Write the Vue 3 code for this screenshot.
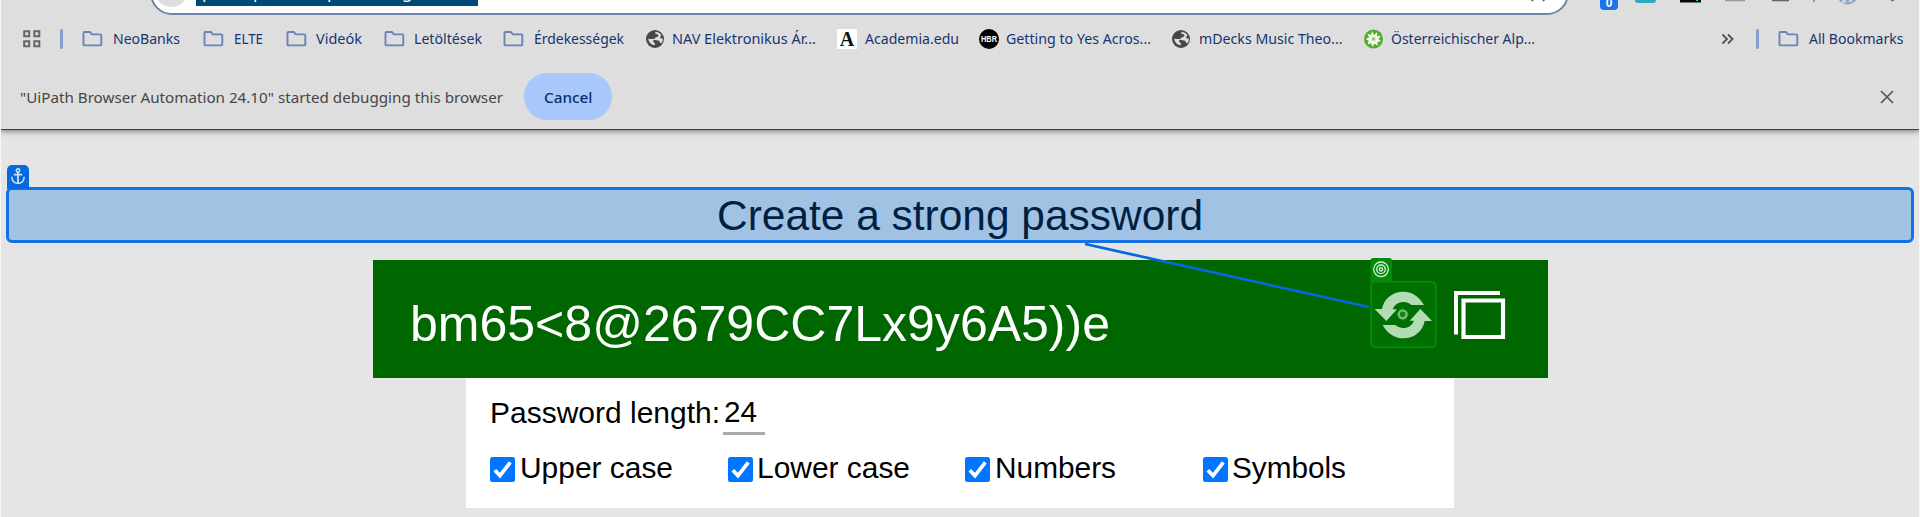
<script setup>
import { h } from 'vue'

// Single-line label set to an exact advance width.
const Fit = (p) =>
  h('svg', { class: 'fit', width: p.w, height: p.h, viewBox: `0 0 ${p.w} ${p.h}` }, [
    h('text', { x: 0, y: p.y, textLength: p.w, lengthAdjust: 'spacingAndGlyphs' }, p.text),
  ])
Fit.props = ['text', 'w', 'h', 'y']

const bookmarks = [
  { icon: 'folder', text: 'NeoBanks', w: 67, gap: 10, after: 23 },
  { icon: 'folder', text: 'ELTE', w: 29, gap: 10, after: 23 },
  { icon: 'folder', text: 'Videók', w: 46, gap: 9, after: 22 },
  { icon: 'folder', text: 'Letöltések', w: 68, gap: 9, after: 21 },
  { icon: 'folder', text: 'Érdekességek', w: 90, gap: 9.5, after: 22 },
  { icon: 'globe', text: 'NAV Elektronikus Ár...', w: 144, gap: 5.5, after: 21 },
  { icon: 'academia', text: 'Academia.edu', w: 94, gap: 7, after: 20 },
  { icon: 'hbr', text: 'Getting to Yes Acros...', w: 145, gap: 6, after: 20.5 },
  { icon: 'globe', text: 'mDecks Music Theo...', w: 143.5, gap: 6, after: 21.5 },
  { icon: 'alpen', text: 'Österreichischer Alp...', w: 144, gap: 6, after: 0 },
]
const options = [
  { text: 'Upper case', w: 153 },
  { text: 'Lower case', w: 153 },
  { text: 'Numbers', w: 121 },
  { text: 'Symbols', w: 114 },
]
</script>

<template>
  <div class="screen">
    <header class="chrome">
      <div class="omnibox">
        <span class="site"></span>
        <span class="selected"><i>p</i><i>p</i><i>/</i><i>p</i><i>g</i></span>
        <svg class="star" width="14" height="3" viewBox="0 0 14 3"><path d="M1 2L2 0M13 2L12 0" stroke="#555" stroke-width="2" /></svg>
      </div>
      <svg class="extensions" width="320" height="12" viewBox="0 0 320 12">
        <rect x="10" y="-8" width="18" height="18" rx="4" fill="#1a73e8" />
        <text x="19" y="6.5" text-anchor="middle" class="count">0</text>
        <rect x="45" y="-12" width="21" height="15" rx="3" fill="#28acc0" />
        <path d="M90 0h21v2.5H90z" fill="#050505" />
        <path d="M106 0h2v1h-2z" fill="#28c8b4" />
        <path d="M135 0h20v1.3h-20z" fill="#999" />
        <path d="M182 0h17v1.3h-17z" fill="#666" />
        <path d="M223 0h2v2h-2z" fill="#8099cd" />
        <circle cx="257.500" cy="-6" r="10.500" fill="#98a6bd" />
        <path d="M252 0h4v3h-4zM259 0h3v2h-3z" fill="#c8d4e8" />
        <circle cx="302.500" cy="-.5" r="1.800" fill="#666" />
      </svg>

      <nav class="bookmarks">
        <svg class="apps" width="18" height="18" viewBox="0 0 18 18">
          <path d="M1.200 1.200h5v5h-5zM11.300 1.200h5v5h-5zM1.200 11.300h5v5h-5zM11.300 11.300h5v5h-5z" fill="none" stroke="#666" stroke-width="2" />
        </svg>
        <span class="divider first"></span>
        <div v-for="b in bookmarks" :key="b.text" class="bookmark" :style="{ gap: b.gap + 'px', marginRight: b.after + 'px' }">
          <svg class="icon" width="21" height="20" viewBox="0 0 21 20">
            <path v-if="b.icon === 'folder'" d="M2.500 3h5.300l2.200 2.400h8.300q1 0 1 1v9q0 1-1 1H2.500q-1 0-1-1V4q0-1 1-1z" fill="none" stroke="#6b82b6" stroke-width="1.900" />
            <g v-else-if="b.icon === 'globe'">
              <circle cx="9" cy="10" r="9" fill="#45484b" />
              <path d="M9.500 2.700q-1 1.500.5 2.200l2.200.7v2l-2.400.8q-1.300.5-1.600 1.600H3.800l-1.600-.6q.2 3 2.300 5.100 1.900 1.700 4.300 1.800V14q-2.300-.8-1.700-2.200.6-1.200 2.200-.9l2.500.5q2-.2 1.900 1.700 0 .9.8.9l1.200-.3q1.500-2.100 1.200-4.300h-2.400q-1-1.700 1-3.400Q13.500 3.100 9.500 2.700z" fill="#dedede" />
            </g>
            <g v-else-if="b.icon === 'academia'">
              <path d="M0 0h20v20H0z" fill="#fff" />
              <text x="10" y="17" text-anchor="middle" class="serif">A</text>
            </g>
            <g v-else-if="b.icon === 'hbr'">
              <circle cx="10" cy="10" r="10" fill="#000" />
              <text x="2" y="13" textLength="16" lengthAdjust="spacingAndGlyphs" class="hbr">HBR</text>
            </g>
            <g v-else>
              <circle cx="9.500" cy="10" r="9.500" fill="#54ad27" />
              <path d="M8 2l2.200 4L13 3l.3 4.300L17 6.800l-2.600 3.300 2.800 2.200-3.900.8.500 3.700-3.200-2.300L8.500 18l-1.400-3.700-3.500 1.200 1-3.800-2.900-1.600 3.400-1.900-1.600-3.500 3.700 1z" fill="#f2f7ef" />
              <path d="M9.500 8v4M7.500 10h4M8 8.500l3 3M11 8.500l-3 3" stroke="#75b856" stroke-width=".8" />
            </g>
          </svg>
          <Fit :text="b.text" :w="b.w" :h="22" :y="16" />
        </div>
        <div class="right">
          <svg width="14" height="12" viewBox="0 0 14 12"><path d="M1.500 1.500L6 6l-4.500 4.500M7 1.500L11.500 6 7 10.500" fill="none" stroke="#555" stroke-width="1.900" /></svg>
          <span class="divider last"></span>
          <div class="bookmark all">
            <svg width="21" height="20" viewBox="0 0 21 20"><path d="M2.500 3h5.300l2.200 2.400h8.300q1 0 1 1v9q0 1-1 1H2.500q-1 0-1-1V4q0-1 1-1z" fill="none" stroke="#6b82b6" stroke-width="1.900" /></svg>
            <Fit text="All Bookmarks" :w="94.5" :h="22" :y="16" />
          </div>
        </div>
      </nav>

      <div class="infobar">
        <Fit text="&quot;UiPath Browser Automation 24.10&quot; started debugging this browser" :w="483" :h="22" :y="17" />
        <button class="cancel"><Fit text="Cancel" :w="48.5" :h="22" :y="17" /></button>
        <svg class="close" width="14" height="14" viewBox="0 0 14 14"><path d="M1 1l12 12M13 1L1 13" stroke="#555" stroke-width="1.700" /></svg>
      </div>
    </header>

    <main class="page">
      <h1 class="title"><Fit text="Create a strong password" :w="486" :h="50" :y="38" /></h1>
      <section class="result">
        <Fit text="bm65&lt;8@2679CC7Lx9y6A5))e" :w="700" :h="60" :y="46" />
        <svg class="copy" width="52" height="50" viewBox="0 0 52 50">
          <path d="M2 43.500V2h44" fill="none" stroke="#fff" stroke-width="4" />
          <path d="M9.500 9.500h39.500v36.500H9.500z" fill="none" stroke="#fff" stroke-width="4.200" />
        </svg>
      </section>
      <section class="settings">
        <div class="length">
          <Fit text="Password length:" :w="230" :h="38" :y="30" />
          <span class="number"><Fit text="24" :w="33" :h="38" :y="29" /></span>
        </div>
        <div class="options">
          <label v-for="o in options" :key="o.text">
            <svg width="25" height="25" viewBox="0 0 25 25">
              <rect width="25" height="25" rx="2.500" fill="#0075ff" />
              <path d="M4.800 13.200l5.200 5.400L20.300 5.300" fill="none" stroke="#fff" stroke-width="3.700" />
            </svg>
            <Fit :text="o.text" :w="o.w" :h="38" :y="28" />
          </label>
        </div>
      </section>
    </main>

    <div class="anchor-box"></div>
    <div class="anchor-tag">
      <svg width="14" height="17" viewBox="0 0 14 17" fill="none" stroke="#cfe3fb" stroke-width="1.500">
        <circle cx="7" cy="2.500" r="1.700" /><path d="M7 4.200V15.500M2.800 6.600h8.400" stroke-width="1.800" /><path d="M.8 8.800Q1 15.200 7 15.400 13 15.200 13.200 8.800" />
      </svg>
    </div>
    <svg class="link" width="290" height="70" viewBox="0 0 290 70"><path d="M1 1L285 64" stroke="#0569dc" stroke-width="2.700" /></svg>
    <svg class="target" width="67" height="91" viewBox="89 54 201 273">
      <path d="M90 126V63q0-9 9-9h47q9 0 9 9v63z" fill="#048a0b" />
      <rect x="92.500" y="125" width="194" height="197" rx="13" fill="#007003" stroke="#048a0b" stroke-width="6" />
      <g fill="none" stroke="#d8eed9"><circle cx="122" cy="88" r="22" stroke-width="4" /><circle cx="122" cy="88" r="13" stroke-width="4" /><circle cx="122" cy="88" r="5" stroke-width="4" /></g>
      <g fill="#b3dcb5">
        <path d="M251 195C236 168 213 155 189 155C155 155 130 178 125 207L103 207L138 243L170 208L157 208C162 195 174 186 189 186C199 186 207 190 213 195Z" />
        <path transform="rotate(180 189 225)" d="M251 195C236 168 213 155 189 155C155 155 130 178 125 207L103 207L138 243L170 208L157 208C162 195 174 186 189 186C199 186 207 190 213 195Z" />
      </g>
      <path d="M187 203v40M167 223h40" stroke="#118516" stroke-width="4" />
      <circle cx="187" cy="223" r="12" fill="#118516" stroke="#79bd7b" stroke-width="7" />
    </svg>
    <span class="edge left"></span><span class="edge end"></span>
  </div>
</template>

<style>
body { margin: 0; background: #e5e5e5; }
</style>
<style scoped>
.screen { position: relative; width: 1920px; height: 517px; overflow: hidden; background: #e5e5e5; font-family: "Liberation Sans", Arial, sans-serif; }
.fit { display: block; flex: none; overflow: visible; }
svg { flex: none; }
.chrome { box-sizing: border-box; position: relative; height: 130px; padding-top: 16px; background: #dedede; border-bottom: 1px solid #3c3c3c; box-shadow: 0 1px 6px rgba(0,0,0,.5); font: 15px "Noto Sans", "Open Sans", sans-serif; fill: #173470; }
.omnibox { position: absolute; box-sizing: border-box; left: 150px; top: -29px; width: 1419px; height: 44px; border: 2px solid #7083a8; border-radius: 22px; background: #fff; }
.site { position: absolute; left: 3px; top: 1px; width: 33px; height: 33px; border-radius: 50%; background: #dedede; }
.selected { position: absolute; left: 44px; top: 9px; width: 282px; height: 24px; background: #004a77; color: #fff; font-size: 17px; line-height: 20px; }
.selected i { position: absolute; top: 0; left: 6px; font-style: normal; }
.selected i:nth-child(2) { left: 57px; }
.selected i:nth-child(3) { left: 121px; }
.selected i:nth-child(4) { left: 131px; }
.selected i:nth-child(5) { left: 206px; }
.star { position: absolute; left: 1379px; top: 26px; }
.extensions { position: absolute; left: 1590px; top: 0; }
.count { font: bold 12px "Liberation Sans", sans-serif; fill: #fff; }
.bookmarks { display: flex; align-items: center; height: 46px; padding: 0 17px 0 23px; }
.divider { flex: none; width: 3px; height: 20px; border-radius: 2px; background: #859fd3; }
.first { margin: 0 19px 0 19px; }
.last { margin: 0 18.500px 0 21px; }
.bookmark { display: flex; align-items: center; flex: none; }
.right { display: flex; align-items: center; margin-left: auto; }
.all { gap: 10px; }
.serif { font: bold 20px "Liberation Serif", serif; fill: #111; }
.hbr { font: bold 8.500px "Liberation Sans", sans-serif; fill: #fff; }
.infobar { display: flex; align-items: center; height: 47px; margin-top: 11px; padding: 0 26px 0 20px; fill: #464646; }
.cancel { display: flex; align-items: center; justify-content: center; width: 88px; height: 47px; margin-left: 21px; padding: 0; border: 0; border-radius: 23px; background: #a8c7fa; fill: #0a2f6d; font: 500 15px "Noto Sans", "Open Sans", sans-serif; }
.close { margin-left: auto; }
.page { display: flex; flex-direction: column; align-items: center; padding-top: 62px; }
.title { margin: 0; height: 68px; font-size: 43px; font-weight: 400; fill: #000; }
.result { box-sizing: border-box; display: flex; align-items: center; justify-content: space-between; width: 1175px; height: 118px; padding: 0 42px 0 37px; background: #060; font-size: 50px; fill: #fff; }
.result .fit { margin-top: 12px; }
.copy { margin-bottom: 6px; }
.settings { box-sizing: border-box; width: 988px; height: 130px; padding: 15px 24px 0; background: #fff; font-size: 30px; fill: #000; }
.length { display: flex; gap: 3px; }
.number { box-sizing: border-box; width: 42px; height: 42px; padding-left: 1px; border-bottom: 3px solid #aaa; }
.options { display: grid; grid-template-columns: repeat(4, 237.500px); margin-top: 15px; }
.options label { display: flex; align-items: center; gap: 4.500px; }
.anchor-box { position: absolute; box-sizing: border-box; left: 6px; top: 187px; width: 1908px; height: 56px; border: 3px solid #1672e3; border-radius: 6px; background: rgba(0,110,224,.29); }
.anchor-tag { position: absolute; left: 6.500px; top: 164.500px; width: 22.500px; height: 24px; border-radius: 5px 5px 0 0; background: #0569e0; display: flex; justify-content: center; align-items: center; }
.link { position: absolute; left: 1084px; top: 243px; }
.target { position: absolute; left: 1369.500px; top: 258px; }
.edge { position: absolute; top: 0; width: 1px; height: 517px; background: #f7f7f7; }
.left { left: 0; }
.end { right: 0; }
</style>
